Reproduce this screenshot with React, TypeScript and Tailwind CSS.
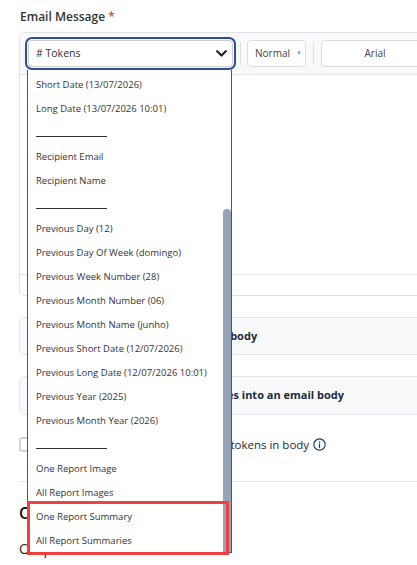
import React from "react";

const tokenOptions: (string | null)[] = [
  "Short Date (13/07/2026)",
  "Long Date (13/07/2026 10:01)",
  null,
  "Recipient Email",
  "Recipient Name",
  null,
  "Previous Day (12)",
  "Previous Day Of Week (domingo)",
  "Previous Week Number (28)",
  "Previous Month Number (06)",
  "Previous Month Name (junho)",
  "Previous Short Date (12/07/2026)",
  "Previous Long Date (12/07/2026 10:01)",
  "Previous Year (2025)",
  "Previous Month Year (2026)",
  null,
  "One Report Image",
  "All Report Images",
  "One Report Summary",
  "All Report Summaries",
];

function ChevronDown() {
  return (
    <svg width="11" height="7" viewBox="0 0 11 7" fill="none">
      <path d="M1.2 1.2 5.5 5.5 9.8 1.2" stroke="#222" strokeWidth="2.2" strokeLinecap="round" strokeLinejoin="round" />
    </svg>
  );
}

function InfoIcon() {
  return (
    <svg width="13" height="13" viewBox="0 0 16 16" fill="none">
      <circle cx="8" cy="8" r="7" stroke="#1e3a6e" strokeWidth="1.4" />
      <circle cx="8" cy="4.8" r="0.9" fill="#1e3a6e" />
      <path d="M8 7.2v4.6" stroke="#1e3a6e" strokeWidth="1.5" strokeLinecap="round" />
    </svg>
  );
}

function TokenMenu() {
  return (
    <div className="absolute left-[27px] top-[70px] w-[205px] h-[483px] bg-white border border-t-0 border-[#555] overflow-hidden">
      <ul className="pt-[3px]">
        {tokenOptions.map((opt, i) => (
          <li key={i} className="h-6 flex items-center pl-[8px] text-[9.5px] text-[#333]">
            {opt ?? <span className="block w-[71px] border-b border-[#333] mt-[6px]" />}
          </li>
        ))}
      </ul>
      {/* scrollbar */}
      <div className="absolute right-0 top-[139px] w-[8px] h-[344px] bg-[#97a3b6] rounded-t-[4px]" />
    </div>
  );
}

export default function App() {
  return (
    <div className="relative w-[417px] h-[565px] overflow-hidden bg-white font-['Open_Sans',sans-serif] text-[#333]">
      <div className="pl-[19px] pt-[7px]">
        <label className="block pl-px text-[12px] font-semibold text-[#333] leading-5">
          Email Message <span className="text-[#e53e3e]">*</span>
        </label>

        {/* editor */}
        <div className="mt-[5px] w-[420px] h-[264px] border border-[#dfe3e8] rounded-l-[6px] flex flex-col">
          <div className="h-[42px] bg-[#f8f9fa] border-b border-[#e3e6ea] flex items-center pl-[8px] rounded-tl-[6px]">
            <div className="w-[205px] h-[27px] bg-white border border-[#ccc] rounded-[4px] outline-2 outline-offset-1 outline-[#2d4e94] flex items-center justify-between pl-[7px] pr-[5px]">
              <span className="text-[10.5px] text-[#333]"># Tokens</span>
              <ChevronDown />
            </div>
            <div className="w-px h-[23px] bg-[#ddd] ml-[7px]" />
            <div className="ml-[6px] w-[59px] h-[27px] bg-white border border-[#ddd] rounded-[4px] flex items-center pl-[7px] gap-[6px]">
              <span className="text-[10px] text-[#444]">Normal</span>
              <span className="text-[6px] text-[#999]">▼</span>
            </div>
            <div className="w-px h-[23px] bg-[#ddd] ml-[7px]" />
            <div className="ml-[7px] w-[108px] h-[27px] bg-white border border-[#ddd] rounded-[4px] flex items-center justify-center">
              <span className="text-[10px] text-[#444]">Arial</span>
            </div>
          </div>
          <div className="flex-1" />
          <div className="h-[21px] border-t border-[#e3e6ea]" />
        </div>

        {/* option cards */}
        <div className="mt-[21px] w-[420px] h-[38px] bg-[#f8f9fa] border border-[#e2e6ea] rounded-l-[6px] flex items-center pl-[14px]">
          <span className="text-[11px] font-bold text-[#1e293b]">Insert the report summary into the body</span>
        </div>
        <div className="mt-[21px] w-[420px] h-[39px] bg-[#f8f9fa] border border-[#e2e6ea] rounded-l-[6px] flex items-center pl-[14px]">
          <span className="text-[11px] font-bold text-[#1e293b]">Embed report images and summaries into an email body</span>
        </div>

        <div className="mt-[21px] flex items-center gap-[12px]">
          <span className="w-[14px] h-[15px] rounded-[3px] border-2 border-[#cfd4da] bg-white" />
          <span className="text-[11.5px] text-[#1e293b] flex items-center gap-[4px]">
            Always replace report placeholder tokens in body <InfoIcon />
          </span>
        </div>

        <div className="mt-[28px] w-[400px] border-t border-[#e3e6ea]" />
        <h3 className="mt-[21px] text-[16px] font-semibold text-[#111] leading-5">Options</h3>
        <p className="mt-[16px] text-[14px] text-[#222] leading-5">Output format</p>
      </div>

      <TokenMenu />

      {/* highlight */}
      <div className="absolute left-[27px] top-[501px] w-[202px] h-[54px] border-[3px] border-[#ef3f3f]" />
    </div>
  );
}
